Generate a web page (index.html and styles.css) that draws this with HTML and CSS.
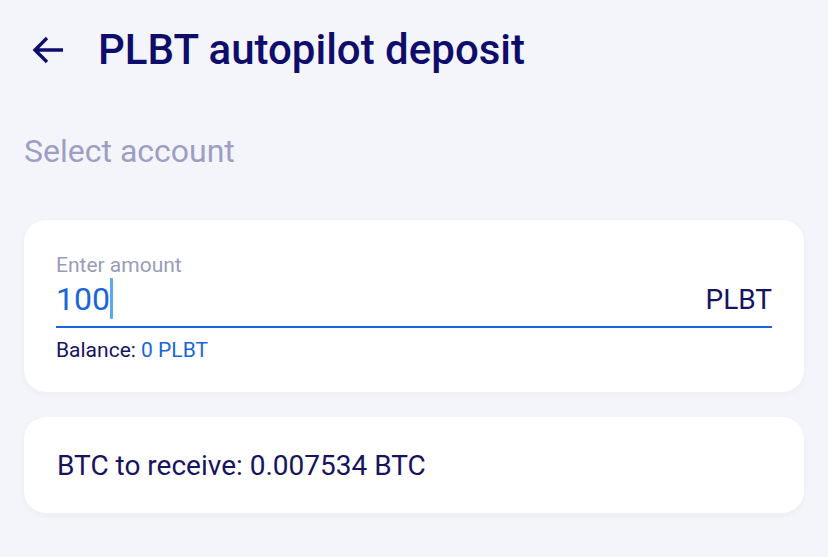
FILE: index.html
```html
<!DOCTYPE html>
<html>
<head>
<meta charset="utf-8">
<link rel="stylesheet" href="styles.css">
</head>
<body>
<div class="page">
  <header class="top">
    <svg class="back" width="34" height="30" viewBox="0 0 34 30"><path d="M31 15H4M15 3L3 15l12 12" fill="none" stroke="#0f0d6b" stroke-width="3.4" stroke-linecap="butt" stroke-linejoin="miter"/></svg>
    <h1 class="title">PLBT autopilot deposit</h1>
  </header>
  <div class="section">Select account</div>
  <div class="card amount-card">
    <div class="label">Enter amount</div>
    <div class="field">
      <span class="value">100<span class="caret"></span></span>
      <span class="unit">PLBT</span>
    </div>
    <div class="balance">Balance: <span class="bal-val">0 PLBT</span></div>
  </div>
  <div class="card receive-card">
    <div class="receive">BTC to receive: 0.007534 BTC</div>
  </div>
</div>
</body>
</html>
```
FILE: styles.css
```css
html, body {
  margin: 0;
  padding: 0;
  background: #f4f5fa;
  font-family: Roboto, "Liberation Sans", sans-serif;
}
.page {
  width: 828px;
  height: 557px;
  padding: 0 24px;
  box-sizing: border-box;
}
.top {
  display: flex;
  align-items: center;
  height: 98px;
  padding-left: 8px;
}
.back {
  margin-right: 32px;
  margin-top: 2px;
}
.title {
  margin: 0;
  font-size: 42px;
  font-weight: 500;
  color: #0f0d6b;
}
.section {
  font-size: 32px;
  color: #9d9ec3;
  margin-top: 36px;
  line-height: 34px;
}
.card {
  background: #fff;
  border-radius: 22px;
  box-shadow: 0 2px 6px rgba(40, 40, 90, 0.04);
}
.amount-card {
  margin-top: 52px;
  height: 172px;
  box-sizing: border-box;
  padding: 34px 32px 0 32px;
}
.label {
  font-size: 21px;
  color: #9a9bbb;
  line-height: 22px;
}
.field {
  display: flex;
  justify-content: space-between;
  align-items: flex-end;
  border-bottom: 2px solid #1a66dd;
  height: 52px;
  box-sizing: border-box;
  padding-bottom: 7px;
}
.value {
  font-size: 32px;
  color: #1b66d6;
  line-height: 36px;
  display: flex;
  align-items: center;
}
.caret {
  display: inline-block;
  width: 3px;
  height: 41px;
  background: #5aa8f0;
  border-radius: 1px;
}
.unit {
  font-size: 28px;
  color: #17135e;
  line-height: 32px;
  padding-bottom: 3px;
}
.balance {
  font-size: 21px;
  color: #17135e;
  margin-top: 9px;
  line-height: 26px;
}
.bal-val {
  color: #1b66d6;
}
.receive-card {
  margin-top: 25px;
  height: 96px;
  display: flex;
  align-items: center;
  padding-left: 33px;
}
.receive {
  font-size: 28px;
  color: #17135e;
}
```
